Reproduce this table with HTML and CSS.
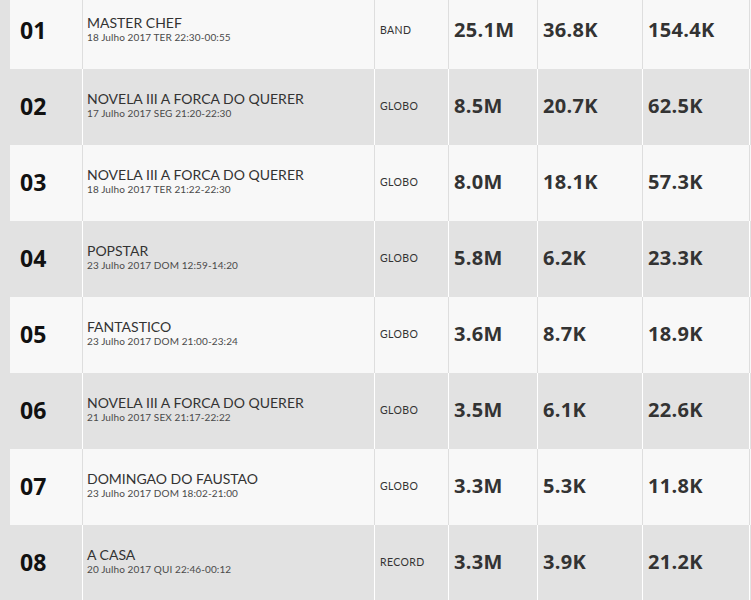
FILE: index.html
```html
<!DOCTYPE html>
<html lang="pt">
<head>
<meta charset="utf-8">
<title>Ranking</title>
<link rel="stylesheet" href="styles.css">
</head>
<body>
<div class="table">
  <div class="row light">
    <div class="cell rank">01</div>
    <div class="cell prog"><div class="title">MASTER CHEF</div><div class="sub">18 Julho 2017 TER 22:30-00:55</div></div>
    <div class="cell chan">BAND</div>
    <div class="cell num">25.1M</div>
    <div class="cell num">36.8K</div>
    <div class="cell num">154.4K</div>
  </div>
  <div class="row dark">
    <div class="cell rank">02</div>
    <div class="cell prog"><div class="title">NOVELA III A FORCA DO QUERER</div><div class="sub">17 Julho 2017 SEG 21:20-22:30</div></div>
    <div class="cell chan">GLOBO</div>
    <div class="cell num">8.5M</div>
    <div class="cell num">20.7K</div>
    <div class="cell num">62.5K</div>
  </div>
  <div class="row light">
    <div class="cell rank">03</div>
    <div class="cell prog"><div class="title">NOVELA III A FORCA DO QUERER</div><div class="sub">18 Julho 2017 TER 21:22-22:30</div></div>
    <div class="cell chan">GLOBO</div>
    <div class="cell num">8.0M</div>
    <div class="cell num">18.1K</div>
    <div class="cell num">57.3K</div>
  </div>
  <div class="row dark">
    <div class="cell rank">04</div>
    <div class="cell prog"><div class="title">POPSTAR</div><div class="sub">23 Julho 2017 DOM 12:59-14:20</div></div>
    <div class="cell chan">GLOBO</div>
    <div class="cell num">5.8M</div>
    <div class="cell num">6.2K</div>
    <div class="cell num">23.3K</div>
  </div>
  <div class="row light">
    <div class="cell rank">05</div>
    <div class="cell prog"><div class="title">FANTASTICO</div><div class="sub">23 Julho 2017 DOM 21:00-23:24</div></div>
    <div class="cell chan">GLOBO</div>
    <div class="cell num">3.6M</div>
    <div class="cell num">8.7K</div>
    <div class="cell num">18.9K</div>
  </div>
  <div class="row dark">
    <div class="cell rank">06</div>
    <div class="cell prog"><div class="title">NOVELA III A FORCA DO QUERER</div><div class="sub">21 Julho 2017 SEX 21:17-22:22</div></div>
    <div class="cell chan">GLOBO</div>
    <div class="cell num">3.5M</div>
    <div class="cell num">6.1K</div>
    <div class="cell num">22.6K</div>
  </div>
  <div class="row light">
    <div class="cell rank">07</div>
    <div class="cell prog"><div class="title">DOMINGAO DO FAUSTAO</div><div class="sub">23 Julho 2017 DOM 18:02-21:00</div></div>
    <div class="cell chan">GLOBO</div>
    <div class="cell num">3.3M</div>
    <div class="cell num">5.3K</div>
    <div class="cell num">11.8K</div>
  </div>
  <div class="row dark">
    <div class="cell rank">08</div>
    <div class="cell prog"><div class="title">A CASA</div><div class="sub">20 Julho 2017 QUI 22:46-00:12</div></div>
    <div class="cell chan">RECORD</div>
    <div class="cell num">3.3M</div>
    <div class="cell num">3.9K</div>
    <div class="cell num">21.2K</div>
  </div>
</div>
</body>
</html>
```
FILE: styles.css
```css
html, body {
  margin: 0;
  padding: 0;
  background: #e2e2e2;
  overflow: hidden;
}
.table {
  margin-top: -7px;
  padding-left: 10px;
  display: flex;
  flex-direction: column;
}
.row {
  display: grid;
  grid-template-columns: 73px 292px 74px 89px 105px 107px;
  height: 76px;
}
.row.light { background: #f8f8f8; }
.row.dark { background: #e2e2e2; }
.cell {
  box-sizing: border-box;
  display: flex;
  flex-direction: column;
  justify-content: center;
  padding: 0 0 4px 5px;
  border-right: 1px solid #dedede;
  font-family: Lato, "Liberation Sans", sans-serif;
  color: #333;
}
.row.dark .cell { border-right-color: #ffffff; }
.prog { padding-left: 4px; }
.rank {
  padding-left: 10px;
  padding-top: 1px;
  font-family: "Open Sans", sans-serif;
  font-weight: 700;
  font-size: 23px;
  color: #111;
}
.title {
  font-size: 14px;
  line-height: 16px;
  color: #333;
  font-weight: 400;
}
.sub {
  font-size: 10px;
  line-height: 13px;
  color: #4a4a4a;
  letter-spacing: 0.1px;
}
.chan {
  font-size: 10.5px;
  letter-spacing: 0.4px;
  color: #333;
  padding-top: 2px;
}
.num {
  font-family: "Open Sans", sans-serif;
  font-weight: 700;
  font-size: 20px;
  letter-spacing: 0.3px;
  color: #333;
}
```
